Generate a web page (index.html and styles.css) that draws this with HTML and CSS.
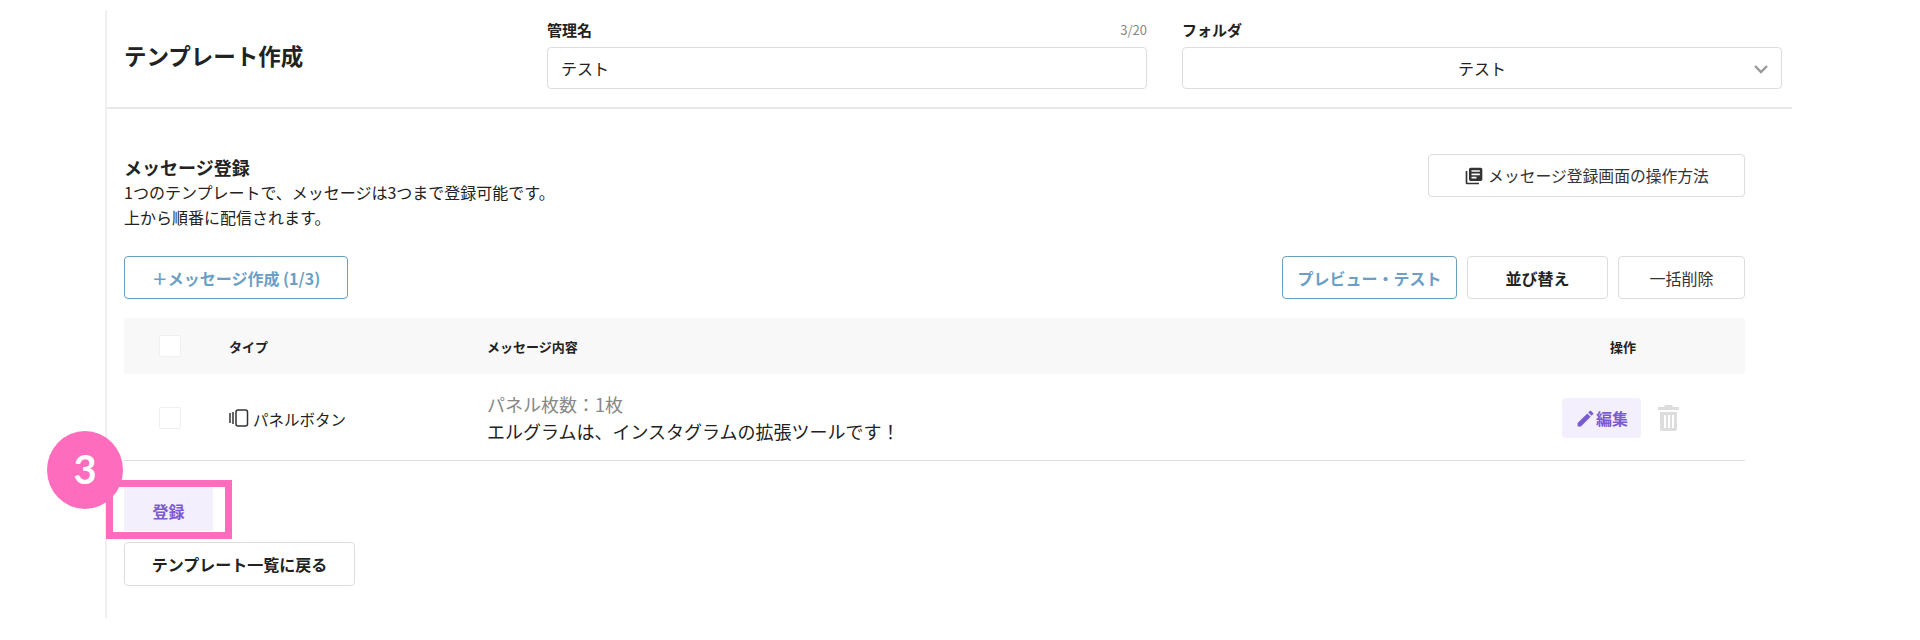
FILE: index.html
```html
<!DOCTYPE html>
<html lang="ja">
<head>
    <meta charset="UTF-8">
    <title>テンプレート作成</title>
    <link rel="stylesheet" href="styles.css">
</head>
<body>
    <div class="page">
        <header class="template-head">
            <h1 class="template-title">テンプレート作成</h1>
            <div class="field field-name">
                <div class="field-label">
                    <span>管理名</span>
                    <span class="field-count">3/20</span>
                </div>
                <div class="field-box">テスト</div>
            </div>
            <div class="field field-folder">
                <div class="field-label">
                    <span>フォルダ</span>
                </div>
                <div class="field-box field-select">
                    <span>テスト</span>
                    <svg class="select-arrow" viewBox="0 0 16 10" width="16" height="10">
                        <path d="M2 2l6 6 6-6" fill="none" stroke="#999" stroke-width="2.4"/>
                    </svg>
                </div>
            </div>
        </header>

        <section class="message-area">
            <div class="intro">
                <div class="intro-text">
                    <h2 class="intro-title">メッセージ登録</h2>
                    <p>1つのテンプレートで、メッセージは3つまで登録可能です。</p>
                    <p>上から順番に配信されます。</p>
                </div>
                <button class="btn btn-guide">
                    <svg viewBox="0 0 24 24" width="20" height="20">
                        <path fill="#333" d="M4 6H2v14c0 1.100.9 2 2 2h14v-2H4V6zm16-4H8c-1.100 0-2 .9-2 2v12c0 1.100.9 2 2 2h12c1.100 0 2-.9 2-2V4c0-1.100-.9-2-2-2zm-1 9H9V9h10v2zm-4 4H9v-2h6v2zm4-8H9V5h10v2z"/>
                    </svg>
                    メッセージ登録画面の操作方法
                </button>
            </div>

            <div class="toolbar">
                <button class="btn btn-blue btn-create">＋メッセージ作成 (1/3)</button>
                <div class="toolbar-right">
                    <button class="btn btn-blue btn-preview">プレビュー・テスト</button>
                    <button class="btn btn-bold btn-sort">並び替え</button>
                    <button class="btn btn-delete">一括削除</button>
                </div>
            </div>

            <div class="table-head">
                <div class="col-check"><span class="checkbox"></span></div>
                <div class="col-type">タイプ</div>
                <div class="col-body">メッセージ内容</div>
                <div class="col-action">操作</div>
            </div>
            <div class="table-row">
                <div class="col-check"><span class="checkbox"></span></div>
                <div class="col-type type-cell">
                    <svg viewBox="0 0 20 18" width="20" height="18">
                        <path d="M1 4v10M4 3v12" fill="none" stroke="#333" stroke-width="1.500"/>
                        <rect x="7" y="1" width="11.500" height="16" rx="2" fill="none" stroke="#333" stroke-width="1.500"/>
                    </svg>
                    <span class="type-name">パネルボタン</span>
                </div>
                <div class="col-body">
                    <div class="panel-count">パネル枚数：1枚</div>
                    <div class="panel-text">エルグラムは、インスタグラムの拡張ツールです！</div>
                </div>
                <div class="col-action action-cell">
                    <button class="btn-edit">
                        <svg viewBox="0 0 24 24" width="21" height="21">
                            <path fill="#7b5cd0" d="M3 17.250V21h3.750L17.810 9.940l-3.750-3.750L3 17.250zM20.710 7.040a1 1 0 0 0 0-1.410l-2.340-2.340a1 1 0 0 0-1.410 0l-1.830 1.830 3.750 3.750 1.830-1.830z"/>
                        </svg>
                        編集
                    </button>
                    <svg class="trash" viewBox="0 0 21 26" width="21" height="26">
                        <path fill="#ddd" d="M7 0h7l1 2h6v3H0V2h6zM2 7h17v17a2 2 0 0 1-2 2H4a2 2 0 0 1-2-2zm4 3v13h2V10zm4 0v13h2V10zm4 0v13h2V10z"/>
                    </svg>
                </div>
            </div>

            <div class="form-actions">
                <button class="btn-submit">登録</button>
                <button class="btn btn-bold btn-back">テンプレート一覧に戻る</button>
            </div>
        </section>

        <div class="note-box"></div>
        <div class="note-badge">3</div>
    </div>
</body>
</html>
```

FILE: styles.css
```css
* {
    margin: 0;
    padding: 0;
    box-sizing: border-box;
}

html, body {
    height: 640px;
    overflow: hidden;
    background: #fff;
}

body {
    font-family: "Noto Sans CJK JP", "Noto Sans", sans-serif;
    color: #222;
}

.page {
    position: relative;
    width: 1687px;
    height: 608px;
    margin: 10px 0 0 105px;
    border-left: 2px solid #f0f0f0;
}

.template-head {
    display: flex;
    height: 99px;
    padding-left: 17px;
    border-bottom: 2px solid #e8e8e8;
}

.template-title {
    width: 423px;
    margin-top: 27px;
    font-size: 22.500px;
    line-height: 36px;
    font-weight: 700;
}

.field-name {
    width: 600px;
    margin-right: 35px;
}

.field-folder {
    width: 600px;
}

.field-label {
    display: flex;
    justify-content: space-between;
    align-items: center;
    height: 37px;
    padding-top: 2px;
    font-size: 15px;
    font-weight: 700;
}

.field-count {
    font-size: 13px;
    font-weight: 400;
    color: #888;
}

.field-box {
    height: 42px;
    padding: 0 13px;
    border: 1px solid #ddd;
    border-radius: 4px;
    font-size: 16px;
    line-height: 40px;
}

.field-select {
    position: relative;
    text-align: center;
}

.select-arrow {
    position: absolute;
    right: 12px;
    top: 16px;
}

.message-area {
    padding: 0 47px 0 17px;
}

.intro {
    display: flex;
    justify-content: space-between;
    align-items: flex-start;
    height: 147px;
    padding-top: 45px;
}

.intro-title {
    font-size: 18px;
    line-height: 26px;
    font-weight: 700;
}

.intro-text p {
    font-size: 16px;
    line-height: 25px;
}

.btn {
    display: flex;
    align-items: center;
    justify-content: center;
    height: 43px;
    background: #fff;
    border: 1px solid #ddd;
    border-radius: 4px;
    font-family: inherit;
    font-size: 16px;
    color: #333;
}

.btn-guide {
    gap: 4px;
    width: 317px;
    font-size: 15.800px;
}

.toolbar {
    display: flex;
    justify-content: space-between;
}

.toolbar-right {
    display: flex;
    gap: 10px;
}

.btn-blue {
    border-color: #6b9fc0;
    color: #6b9fc6;
    font-weight: 700;
}

.btn-bold {
    font-weight: 700;
    color: #222;
}

.btn-create {
    width: 224px;
}

.btn-preview {
    width: 175px;
}

.btn-sort {
    width: 141px;
}

.btn-delete {
    width: 127px;
}

.table-head,
.table-row {
    display: flex;
    align-items: center;
}

.table-head {
    height: 56px;
    margin-top: 19px;
    background: #f8f8f8;
    border-radius: 4px;
    font-size: 13px;
    font-weight: 700;
}

.table-row {
    height: 87px;
    padding-top: 2px;
    border-bottom: 1px solid #ddd;
}

.col-check {
    display: flex;
    width: 105px;
    padding-left: 35px;
}

.checkbox {
    width: 22px;
    height: 22px;
    background: #fff;
    border: 1px solid #f0f0f0;
    border-radius: 2px;
}

.col-type {
    width: 258px;
}

.type-cell {
    display: flex;
    align-items: center;
    gap: 4px;
    font-size: 15.500px;
}

.type-name {
    margin-top: 2px;
}

.col-body {
    flex: 1;
}

.col-action {
    width: 183px;
    padding-right: 61px;
    text-align: center;
}

.panel-count,
.panel-text {
    font-size: 18px;
    line-height: 27px;
}

.panel-count {
    color: #888;
}

.action-cell {
    display: flex;
    align-items: center;
    gap: 17px;
    padding: 0;
}

.btn-edit {
    display: flex;
    align-items: center;
    justify-content: center;
    width: 79px;
    height: 40px;
    background: #f3effc;
    border: none;
    border-radius: 4px;
    font-family: inherit;
    font-size: 16px;
    font-weight: 700;
    color: #7b5cd0;
}

.form-actions {
    margin-top: 26px;
}

.btn-submit {
    display: block;
    width: 89px;
    height: 44px;
    padding-top: 3px;
    background: #f3effc;
    border: none;
    border-radius: 2px;
    font-family: inherit;
    font-size: 16px;
    font-weight: 700;
    color: #7b5cd0;
}

.btn-back {
    width: 231px;
    height: 44px;
    margin-top: 11px;
}

/* 注釈 */
.note-box {
    position: absolute;
    left: -1px;
    top: 470px;
    width: 126px;
    height: 59px;
    border: 7px solid #fd6cbd;
}

.note-badge {
    position: absolute;
    left: -60px;
    top: 421px;
    width: 76px;
    height: 78px;
    background: #fd6cbd;
    border-radius: 50%;
    font-family: "Lato", sans-serif;
    font-size: 40px;
    font-weight: 700;
    line-height: 76px;
    text-align: center;
    color: #fff;
}
```
